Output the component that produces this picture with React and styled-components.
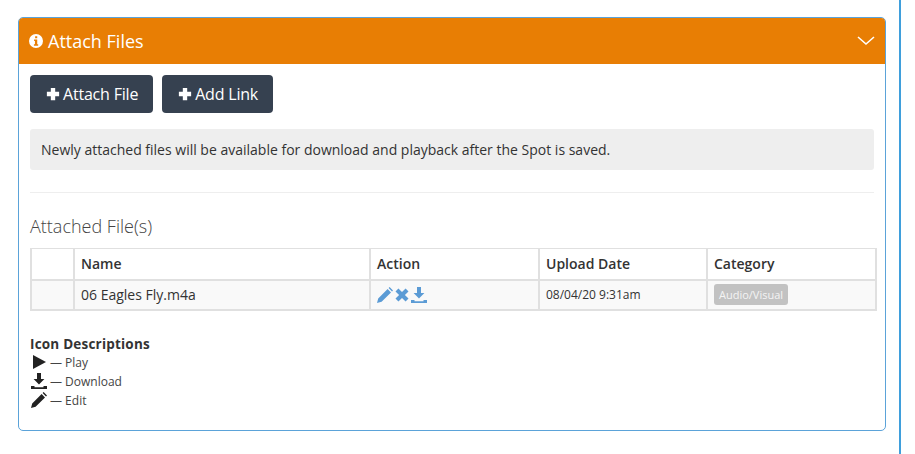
import React from "react";
import styled, { createGlobalStyle } from "styled-components";

const GlobalStyle = createGlobalStyle`
  html, body {
    margin: 0;
    padding: 0;
    background: #fff;
    overflow: hidden;
  }
  * {
    box-sizing: border-box;
  }
`;

const Page = styled.div`
  width: 901px;
  height: 454px;
  padding: 17px 13px 0 18px;
  border-right: 2px solid #3f9fdc;
  font-family: "Open Sans", sans-serif;
  color: #333;
`;

const Panel = styled.section`
  height: 414px;
  border: 1px solid #5ba3d9;
  border-radius: 5px;
  overflow: hidden;
`;

const PanelHeader = styled.header`
  height: 47px;
  background: #e87e04;
  color: #fff;
  display: flex;
  align-items: center;
  justify-content: space-between;
  padding: 0 11px 0 11px;
  margin: -1px -1px 0 -1px;
`;

const PanelTitle = styled.h3`
  display: flex;
  align-items: center;
  gap: 5px;
  margin: 0;
  font-size: 18px;
  font-weight: 400;
  line-height: 24px;
`;

const PanelBody = styled.div`
  padding: 11px 11px 0;
`;

const ButtonRow = styled.div`
  display: flex;
  gap: 9px;
`;

const Button = styled.button`
  display: flex;
  align-items: center;
  gap: 3px;
  height: 38px;
  padding: 0 15px 0 16px;
  border: none;
  border-radius: 4px;
  background: #364150;
  color: #fff;
  font-family: inherit;
  font-size: 16px;
  letter-spacing: -0.2px;
`;

const Notice = styled.div`
  margin-top: 16px;
  height: 41px;
  display: flex;
  align-items: center;
  padding: 0 11px;
  background: #eee;
  border-radius: 3px;
  font-size: 14px;
  color: #333;
`;

const Divider = styled.hr`
  margin: 22px 0 0;
  border: 0;
  border-top: 1px solid #eee;
`;

const SectionTitle = styled.h4`
  margin: 21px 0 0;
  font-size: 18px;
  font-weight: 300;
  line-height: 25px;
  color: #444;
`;

const Table = styled.table`
  width: 845px;
  margin-top: 9px;
  border-collapse: collapse;
  table-layout: fixed;
  font-size: 14px;
`;

const HeadCell = styled.th`
  height: 31px;
  width: ${(p) => p.$width}px;
  padding: 0 6px;
  border: 2px solid #e0e0e0;
  border-width: 1px 2px 2px;
  text-align: left;
  font-weight: 600;
  color: #333;
`;

const BodyRow = styled.tr`
  background: #f9f9f9;
`;

const Cell = styled.td`
  height: 30px;
  padding: 0 6px;
  border: 2px solid #e0e0e0;
  border-width: 0 2px 2px;
  font-size: ${(p) => p.$size || 14}px;
`;

const ActionIcons = styled.div`
  display: flex;
  align-items: center;
  color: #5b9bd5;
  gap: 1px;
`;

const Tag = styled.span`
  display: inline-block;
  padding: 3px 5px;
  background: #c2c2c2;
  border-radius: 3px;
  color: #f4f4f4;
  font-size: 11px;
  line-height: 15px;
`;

const Legend = styled.div`
  margin-top: 24px;
`;

const LegendTitle = styled.div`
  font-size: 13.5px;
  font-weight: 700;
  line-height: 18px;
  letter-spacing: 0.2px;
`;

const LegendRow = styled.div`
  display: flex;
  align-items: center;
  gap: 3px;
  height: 19px;
  font-size: 12px;
  color: #444;
`;

const IconSlot = styled.span`
  display: flex;
  width: 17px;
  justify-content: center;
  color: #222;
`;

const Icon = ({ size = 16, children }) => (
  <svg width={size} height={size} viewBox="0 0 16 16" fill="currentColor">
    {children}
  </svg>
);

const InfoIcon = () => (
  <Icon size={14}>
    <path
      fillRule="evenodd"
      d="M8 0a8 8 0 1 1 0 16A8 8 0 0 1 8 0zM7 2.6h2.4v2.3H7zM5.8 6.4h3.6v5.4h1.1v1.6H5.6v-1.6h1.2V8H5.8z"
    />
  </Icon>
);

const PlusIcon = () => (
  <Icon size={14}>
    <path d="M5.5 1h5v4.5H15v5h-4.5V15h-5v-4.5H1v-5h4.5z" />
  </Icon>
);

const PencilIcon = () => (
  <Icon>
    <path d="M0 16l1.2-4.6L10.6 2l3.4 3.4-9.4 9.4zM11.6 1l1-1L16 3.4l-1 1z" />
  </Icon>
);

const RemoveIcon = () => (
  <Icon>
    <path d="M4.4 1.5L8 5.1l3.6-3.6 2.9 2.9L10.9 8l3.6 3.6-2.9 2.9L8 10.9l-3.6 3.6-2.9-2.9L5.1 8 1.5 4.4z" />
  </Icon>
);

const DownloadIcon = () => (
  <Icon>
    <path d="M6 0h4v6h3.4L8 11.4 2.6 6H6zM0 13h3.5v1.2h9V13H16v3H0z" />
  </Icon>
);

const PlayIcon = () => (
  <Icon>
    <path d="M2 1l13 7-13 7z" />
  </Icon>
);

const ChevronIcon = () => (
  <svg width="18" height="11" viewBox="0 0 18 11" fill="none" stroke="#fff" strokeWidth="1.6">
    <path d="M1 2l8 7 8-7" />
  </svg>
);

const App = () => {
  return (
    <Page>
      <GlobalStyle />
      <Panel>
        <PanelHeader>
          <PanelTitle>
            <InfoIcon />
            Attach Files
          </PanelTitle>
          <ChevronIcon />
        </PanelHeader>
        <PanelBody>
          <ButtonRow>
            <Button>
              <PlusIcon />
              Attach File
            </Button>
            <Button>
              <PlusIcon />
              Add Link
            </Button>
          </ButtonRow>
          <Notice>
            Newly attached files will be available for download and playback after the Spot is saved.
          </Notice>
          <Divider />
          <SectionTitle>Attached File(s)</SectionTitle>
          <Table>
            <thead>
              <tr>
                <HeadCell $width={43} />
                <HeadCell $width={296}>Name</HeadCell>
                <HeadCell $width={169}>Action</HeadCell>
                <HeadCell $width={168}>Upload Date</HeadCell>
                <HeadCell $width={169}>Category</HeadCell>
              </tr>
            </thead>
            <tbody>
              <BodyRow>
                <Cell />
                <Cell>06 Eagles Fly.m4a</Cell>
                <Cell>
                  <ActionIcons>
                    <PencilIcon />
                    <RemoveIcon />
                    <DownloadIcon />
                  </ActionIcons>
                </Cell>
                <Cell $size={12}>08/04/20 9:31am</Cell>
                <Cell>
                  <Tag>Audio/Visual</Tag>
                </Cell>
              </BodyRow>
            </tbody>
          </Table>
          <Legend>
            <LegendTitle>Icon Descriptions</LegendTitle>
            <LegendRow>
              <IconSlot>
                <PlayIcon />
              </IconSlot>
              — Play
            </LegendRow>
            <LegendRow>
              <IconSlot>
                <DownloadIcon />
              </IconSlot>
              — Download
            </LegendRow>
            <LegendRow>
              <IconSlot>
                <PencilIcon />
              </IconSlot>
              — Edit
            </LegendRow>
          </Legend>
        </PanelBody>
      </Panel>
    </Page>
  );
};

export default App;
